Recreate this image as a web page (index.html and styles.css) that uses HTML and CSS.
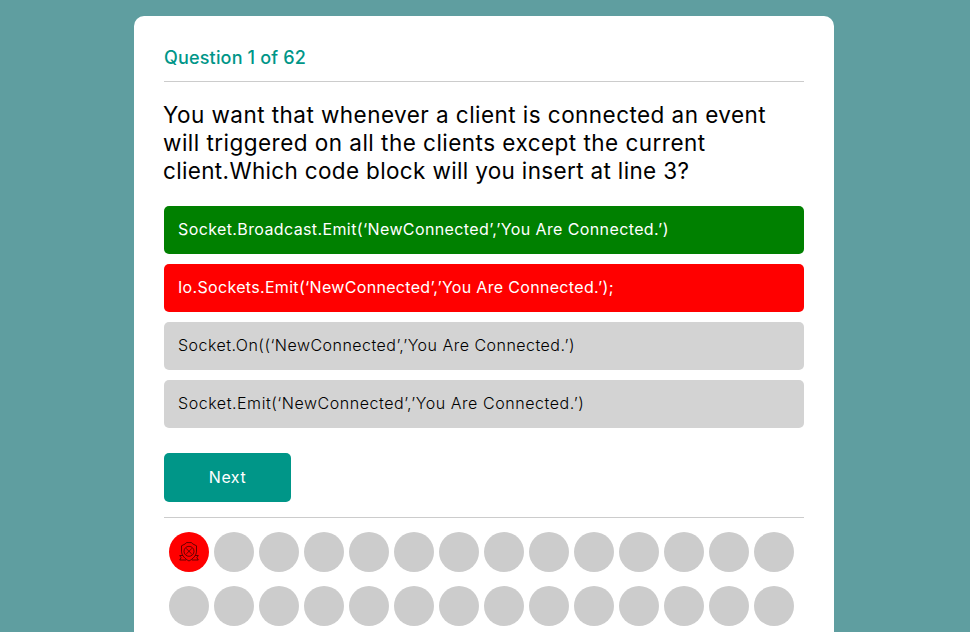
FILE: index.html
```html
<!DOCTYPE html>
<html lang="en">
<head>
<meta charset="utf-8">
<meta name="viewport" content="width=device-width, initial-scale=1">
<title>Quiz</title>
<link rel="stylesheet" href="styles.css">
</head>
<body>
<main class="quiz-box">
  <div class="question-number">Question 1 of 62</div>
  <h1 class="question-text"><span class="line line-1">You want that whenever a client is connected an event</span> <span class="line line-2">will triggered on all the clients except the current</span> <span class="line line-3">client.Which code block will you insert at line 3?</span></h1>
  <div class="options">
    <div class="option correct"><span>Socket.Broadcast.Emit(‘NewConnected’,’You Are Connected.’)</span></div>
    <div class="option wrong"><span>Io.Sockets.Emit(‘NewConnected’,’You Are Connected.’);</span></div>
    <div class="option option-3"><span>Socket.On((‘NewConnected’,’You Are Connected.’)</span></div>
    <div class="option option-4"><span>Socket.Emit(‘NewConnected’,’You Are Connected.’)</span></div>
  </div>
  <button class="next-button" type="button">Next</button>
  <div class="answers-indicator">
    <div class="dot wrong">
      <svg class="badge" viewBox="0 0 20 20" fill="none" stroke="#000" stroke-width=".6" aria-hidden="true">
        <path d="M7.5.6h5l1.200 1.300 3.800 1.900v5.400c0 4.300-3.700 7.800-7.500 9.800-3.800-2-7.500-5.500-7.500-9.800V3.800l3.800-1.900z"/>
        <circle cx="10" cy="9.3" r="5"/>
        <path d="M7.200 6.500l5.600 5.600M12.800 6.500l-5.600 5.600"/>
        <path d="M3.700 13.500H.7l1.400 2.200-1.400 2.300h6.500M16.300 13.500h3l-1.400 2.200 1.400 2.300h-6.500"/>
      </svg>
    </div>
    <div class="dot"></div><div class="dot"></div><div class="dot"></div><div class="dot"></div><div class="dot"></div><div class="dot"></div>
    <div class="dot"></div><div class="dot"></div><div class="dot"></div><div class="dot"></div><div class="dot"></div><div class="dot"></div><div class="dot"></div>
    <div class="dot"></div><div class="dot"></div><div class="dot"></div><div class="dot"></div><div class="dot"></div><div class="dot"></div><div class="dot"></div>
    <div class="dot"></div><div class="dot"></div><div class="dot"></div><div class="dot"></div><div class="dot"></div><div class="dot"></div><div class="dot"></div>
  </div>
</main>
</body>
</html>
```
FILE: styles.css
```css
* { box-sizing: border-box; }

body {
  margin: 0;
  padding: 16px 2px 0 0;
  height: 632px;
  overflow: hidden;
  background: #5f9ea0;
  font-family: Inter, sans-serif;
  color: #000;
}

.quiz-box {
  width: 700px;
  height: 616px;
  margin: 0 auto;
  padding: 30px;
  border-radius: 10px 10px 0 0;
  background: #fff;
}

.question-number {
  height: 36px;
  border-bottom: 1px solid #ccc;
  color: #009688;
  font-size: 18px;
  font-weight: 500;
  line-height: 24px;
  letter-spacing: .17px;
}

.question-text {
  margin: 19px 0 21px -1px;
  font-size: 22.5px;
  font-weight: 400;
  line-height: 28px;
}

.line {
  display: block;
  width: max-content;
  white-space: nowrap;
}

.line-1 { letter-spacing: .45px; }
.line-2 { letter-spacing: .47px; }
.line-3 { letter-spacing: .34px; }

.options {
  display: flex;
  flex-direction: column;
  gap: 10px;
}

.option {
  display: flex;
  align-items: center;
  height: 48px;
  padding: 0 14px 2px;
  border-radius: 5px;
  background: #d3d3d3;
  font-size: 16px;
  font-weight: 300;
  white-space: nowrap;
}

.option.correct,
.option.wrong {
  color: #fff;
  font-weight: 400;
}

.option.correct {
  background: #008000;
  letter-spacing: .385px;
}

.option.wrong {
  background: #f00;
  letter-spacing: .32px;
}

.option-3 { letter-spacing: .48px; }
.option-4 { letter-spacing: .55px; }

.next-button {
  display: block;
  width: 127px;
  height: 49px;
  margin: 25px 0 15px;
  padding: 0;
  border: 0;
  border-radius: 5px;
  background: #009688;
  color: #fff;
  font: 400 16px/49px Inter, sans-serif;
  letter-spacing: .5px;
}

.answers-indicator {
  display: grid;
  grid-template-columns: repeat(14, 40px);
  grid-auto-rows: 40px;
  align-content: start;
  gap: 14px 5px;
  padding: 14px 5px 0;
  border-top: 1px solid #ccc;
}

.dot {
  display: flex;
  align-items: center;
  justify-content: center;
  width: 40px;
  height: 40px;
  border-radius: 50%;
  background: #ccc;
}

.dot.wrong { background: #f00; }

.badge {
  width: 20px;
  height: 20px;
}
```
